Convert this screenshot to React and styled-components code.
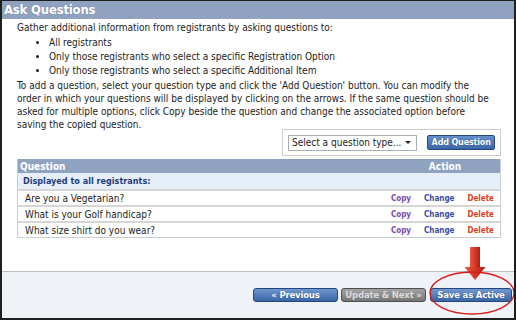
import React from 'react';
import styled, { createGlobalStyle } from 'styled-components';

const Global = createGlobalStyle`
  html, body {
    margin: 0;
    padding: 0;
    background: #ffffff;
  }
  body {
    font-family: "DejaVu Sans Condensed", "DejaVu Sans", Verdana, sans-serif;
    font-stretch: condensed;
    color: #1c1c1c;
  }
`

const Frame = styled.div`
  position: relative;
  width: 516px;
  height: 320px;
  box-sizing: border-box;
  border: 2px solid #1f1f1f;
  border-top-width: 1px;
  display: flex;
  flex-direction: column;
  overflow: hidden;
`

const TitleBar = styled.div`
  height: 18px;
  line-height: 18px;
  padding-left: 2px;
  background: #8fa3c1;
  color: #ffffff;
  font-size: 13px;
  font-weight: bold;
  letter-spacing: -0.2px;
  text-shadow: 0 0 1px rgba(60, 80, 110, 0.5);
`

const Body = styled.div`
  flex: 1;
  padding: 2px 13px 0 15px;
  font-size: 10px;
`

const Intro = styled.p`
  margin: 0;
  line-height: 14px;
`

const List = styled.ul`
  margin: 1px 0 0;
  padding-left: 32px;
  li {
    line-height: 14px;
  }
`

const Para = styled.p`
  margin: 1px 0 0;
  line-height: 13px;
`

const ToolBox = styled.div`
  margin: -2px 0 0 auto;
  width: 219px;
  height: 27px;
  box-sizing: border-box;
  border: 1px solid #cccccc;
  display: flex;
  align-items: center;
  padding: 0 5px;
  gap: 10px;
`

const SelectBox = styled.div`
  width: 130px;
  height: 16px;
  box-sizing: border-box;
  border: 1px solid #a9aeb5;
  background: #ffffff;
  display: flex;
  align-items: center;
  justify-content: space-between;
  padding: 0 5px 0 3px;
  font-size: 10px;
  color: #222;
`

const Caret = styled.span`
  width: 0;
  height: 0;
  border-left: 3px solid transparent;
  border-right: 3px solid transparent;
  border-top: 3px solid #222;
`

const SmallButton = styled.div`
  width: 68px;
  height: 15px;
  box-sizing: border-box;
  border: 1px solid #24467a;
  border-radius: 2px;
  background: linear-gradient(#6690cc, #3a67a8);
  color: #ffffff;
  font-size: 9px;
  font-weight: bold;
  letter-spacing: -0.2px;
  line-height: 13px;
  text-align: center;
  white-space: nowrap;
  overflow: hidden;
  text-shadow: 0 0 1px #1d3a66;
`

const Table = styled.div`
  margin-top: 3px;
  border: 1px solid #c8cdd3;
  border-top: none;
  font-size: 10px;
`

const Row = styled.div`
  display: grid;
  grid-template-columns: 1fr 110px;
  align-items: center;
  height: ${p => p.$h || 16}px;
  box-sizing: border-box;
  background: ${p => p.$bg || '#ffffff'};
  border-top: ${p => p.$line ? '2px solid #d6d6d6' : 'none'};
`

const HeadCell = styled.div`
  color: #ffffff;
  font-weight: bold;
  padding-left: ${p => p.$pad || 0}px;
  text-align: ${p => p.$align || 'left'};
`

const GroupCell = styled.div`
  grid-column: 1 / 3;
  padding-left: 5px;
  color: #1f3c78;
  font-size: 9px;
  font-weight: bold;
`

const QCell = styled.div`
  padding-left: 7px;
  color: #1c1c1c;
`

const Actions = styled.div`
  display: flex;
  justify-content: flex-end;
  gap: 13px;
  padding-right: 6px;
  font-weight: bold;
  font-size: 8px;
`

const Action = styled.span`
  color: ${p => p.$color};
`

const Footer = styled.div`
  height: 47px;
  box-sizing: border-box;
  border-top: 1px solid #b9bec5;
  background: #eff3f8;
  display: flex;
  align-items: center;
  justify-content: flex-end;
  gap: 3px;
  padding-right: 2px;
`

const NavButton = styled.div`
  width: ${p => p.$w}px;
  height: 14px;
  box-sizing: border-box;
  margin-left: ${p => p.$gap || 0}px;
  border: 1px solid ${p => p.$off ? '#4f4f4f' : '#23467d'};
  border-radius: 3px;
  background: ${p => p.$off
    ? 'linear-gradient(#a3a3a3, #767676)'
    : 'linear-gradient(#6f98d0, #3a66a6)'};
  color: ${p => p.$off ? '#dadada' : '#ffffff'};
  font-size: 9.5px;
  font-weight: bold;
  letter-spacing: -0.2px;
  line-height: 12px;
  text-align: center;
  white-space: nowrap;
  overflow: hidden;
  text-shadow: ${p => p.$off ? 'none' : '0 0 1px #1b3866'};
`

const Callout = styled.svg`
  position: absolute;
  left: ${p => p.$x}px;
  top: ${p => p.$y}px;
  pointer-events: none;
`

const rows = [
  'Are you a Vegetarian?',
  'What is your Golf handicap?',
  'What size shirt do you wear?',
]

export default function App() {
  return (
    <Frame>
      <Global />
      <TitleBar>Ask Questions</TitleBar>
      <Body>
        <Intro>Gather additional information from registrants by asking questions to:</Intro>
        <List>
          <li>All registrants</li>
          <li>Only those registrants who select a specific Registration Option</li>
          <li>Only those registrants who select a specific Additional Item</li>
        </List>
        <Para>
          To add a question, select your question type and click the 'Add Question' button. You can modify the<br />
          order in which your questions will be displayed by clicking on the arrows. If the same question should be<br />
          asked for multiple options, click Copy beside the question and change the associated option before<br />
          saving the copied question.
        </Para>
        <ToolBox>
          <SelectBox>
            <span>Select a question type...</span>
            <Caret />
          </SelectBox>
          <SmallButton>Add Question</SmallButton>
        </ToolBox>
        <Table>
          <Row $h={14} $bg="#8fa3c1">
            <HeadCell $pad={2}>Question</HeadCell>
            <HeadCell $align="center">Action</HeadCell>
          </Row>
          <Row $bg="#e6eff9">
            <GroupCell>Displayed to all registrants:</GroupCell>
          </Row>
          {rows.map(q => (
            <Row key={q} $line>
              <QCell>{q}</QCell>
              <Actions>
                <Action $color="#7a48b0">Copy</Action>
                <Action $color="#3a4e9c">Change</Action>
                <Action $color="#e2401c">Delete</Action>
              </Actions>
            </Row>
          ))}
        </Table>
      </Body>
      <Footer>
        <NavButton $w={85}>« Previous</NavButton>
        <NavButton $w={85} $off>Update &amp; Next »</NavButton>
        <NavButton $w={82} $gap={1}>Save as Active</NavButton>
      </Footer>
      <Callout $x={461} $y={245} width="26" height="36" viewBox="0 0 26 36">
        <defs>
          <linearGradient id="arrowFill" x1="0" y1="0" x2="1" y2="0">
            <stop offset="0" stopColor="#f2553f" />
            <stop offset="1" stopColor="#b51b12" />
          </linearGradient>
        </defs>
        <rect x="7" y="1" width="10" height="21" fill="url(#arrowFill)" />
        <polygon points="1.5,21 22.5,21 12,34" fill="url(#arrowFill)" />
      </Callout>
      <Callout $x={424} $y={267} width="92" height="50" viewBox="0 0 92 50">
        <ellipse cx="46" cy="25" rx="42" ry="21" fill="none" stroke="#d61d1d" strokeWidth="1.4" />
      </Callout>
    </Frame>
  );
}
